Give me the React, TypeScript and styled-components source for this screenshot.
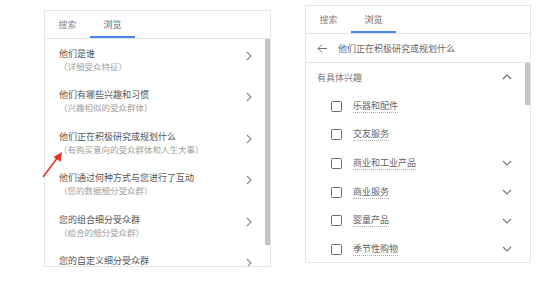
import React from 'react';
import styled, { createGlobalStyle } from 'styled-components';

const GlobalStyle = createGlobalStyle`
  html, body {
    margin: 0;
    padding: 0;
    background: #fff;
  }
  body {
    font-family: "Noto Sans CJK SC", "Noto Sans", sans-serif;
    color: #555;
  }
  * { box-sizing: border-box; }
`;

const browseItems = [
  { title: '他们是谁', sub: '（详细受众特征）' },
  { title: '他们有哪些兴趣和习惯', sub: '（兴趣相似的受众群体）' },
  { title: '他们正在积极研究或规划什么', sub: '（有购买意向的受众群体和人生大事）' },
  { title: '他们通过何种方式与您进行了互动', sub: '（您的数据细分受众群）' },
  { title: '您的组合细分受众群', sub: '（组合的细分受众群）' },
  { title: '您的自定义细分受众群', sub: '' },
];

const interests = [
  { label: '乐器和配件', more: false },
  { label: '交友服务', more: false },
  { label: '商业和工业产品', more: true },
  { label: '商业服务', more: true },
  { label: '婴童产品', more: true },
  { label: '季节性购物', more: true },
];

//右向きシェブロン
const ChevronRight = () => (
  <svg width="6" height="10" viewBox="0 0 6 10">
    <polyline points="1,1 5,5 1,9" fill="none" stroke="#888" strokeWidth="1.1" />
  </svg>
);

const ChevronDown = () => (
  <svg width="10" height="6" viewBox="0 0 10 6">
    <polyline points="1,1 5,5 9,1" fill="none" stroke="#777" strokeWidth="1.2" />
  </svg>
);

const ChevronUp = () => (
  <svg width="10" height="6" viewBox="0 0 10 6">
    <polyline points="1,5 5,1 9,5" fill="none" stroke="#666" strokeWidth="1.2" />
  </svg>
);

const BackArrow = () => (
  <svg width="10" height="9" viewBox="0 0 10 9">
    <line x1="1" y1="4.5" x2="10" y2="4.5" stroke="#777" strokeWidth="1" />
    <polyline points="5,0.5 1,4.5 5,8.5" fill="none" stroke="#777" strokeWidth="1" />
  </svg>
);

function App() {
  return (
    <Page>
      <GlobalStyle />
      <LeftPanel>
        <TabBar>
          <Tab>搜索</Tab>
          <Tab $active>浏览</Tab>
        </TabBar>
        <Body>
          <List>
            {browseItems.map((item) => (
              <Item key={item.title}>
                <ItemText>
                  <ItemTitle>{item.title}</ItemTitle>
                  {item.sub && <ItemSub>{item.sub}</ItemSub>}
                </ItemText>
                <ItemChevron>
                  <ChevronRight />
                </ItemChevron>
              </Item>
            ))}
          </List>
          <Track>
            <Thumb $height={206} />
          </Track>
        </Body>
      </LeftPanel>

      <RightPanel>
        <TabBar>
          <Tab>搜索</Tab>
          <Tab $active>浏览</Tab>
        </TabBar>
        <BackRow>
          <BackArrow />
          <BackTitle>他们正在积极研究或规划什么</BackTitle>
        </BackRow>
        <Body>
          <List>
            <SectionHeader>
              <span>有具体兴趣</span>
              <ChevronUp />
            </SectionHeader>
            {interests.map((it) => (
              <CheckRow key={it.label}>
                <CheckBox />
                <CheckLabel>{it.label}</CheckLabel>
                {it.more && (
                  <RowChevron>
                    <ChevronDown />
                  </RowChevron>
                )}
              </CheckRow>
            ))}
          </List>
          <Track>
            <Thumb $height={42} />
          </Track>
        </Body>
      </RightPanel>

      <Pointer width="34" height="40" viewBox="0 0 34 40">
        <line x1="7" y1="32" x2="22" y2="12" stroke="#e8352b" strokeWidth="1.6" />
        <polygon points="26,7 24.5,17 17.5,12" fill="#e8352b" />
      </Pointer>
    </Page>
  );
}

export default App;

const Page = styled.div`
  position: relative;
  display: flex;
  align-items: flex-start;
  width: 554px;
  height: 282px;
  padding-left: 44px;
  overflow: hidden;
`;

const LeftPanel = styled.div`
  margin-top: 10px;
  width: 227px;
  height: 257px;
  border: 1px solid #e6e6e6;
  display: flex;
  flex-direction: column;
  overflow: hidden;
  background: #fff;
`;

const RightPanel = styled.div`
  margin-top: 5px;
  margin-left: 34px;
  width: 226px;
  height: 258px;
  border: 1px solid #e6e6e6;
  display: flex;
  flex-direction: column;
  overflow: hidden;
  background: #fff;
`;

const TabBar = styled.div`
  display: flex;
  height: 28px;
  flex-shrink: 0;
  border-bottom: 1px solid #e3e3e3;
`;

const Tab = styled.div<{ $active?: boolean }>`
  width: 45px;
  display: flex;
  align-items: center;
  justify-content: center;
  font-size: 9px;
  color: ${(p) => (p.$active ? '#666' : '#888')};
  box-shadow: ${(p) => (p.$active ? 'inset 0 -2px 0 #4a86e8' : 'none')};
`;

const Body = styled.div`
  flex: 1;
  display: flex;
  min-height: 0;
`;

const List = styled.div`
  flex: 1;
  overflow: hidden;
`;

const Track = styled.div`
  width: 5px;
  flex-shrink: 0;
`;

const Thumb = styled.div<{ $height: number }>`
  width: 5px;
  height: ${(p) => p.$height}px;
  background: #c4c4c4;
`;

const Item = styled.div`
  display: flex;
  align-items: flex-start;
  padding: 8.5px 13px 9px 14px;
`;

const ItemText = styled.div`
  flex: 1;
`;

const ItemTitle = styled.div`
  font-size: 9px;
  line-height: 12px;
  color: #555;
`;

const ItemSub = styled.div`
  font-size: 8.5px;
  line-height: 12px;
  color: #a0a0a0;
`;

const ItemChevron = styled.div`
  margin-top: 3px;
  display: flex;
`;

const BackRow = styled.div`
  display: flex;
  align-items: center;
  height: 29px;
  flex-shrink: 0;
  padding-left: 11px;
  border-bottom: 1px solid #e3e3e3;
`;

const BackTitle = styled.span`
  margin-left: 11px;
  font-size: 9px;
  color: #666;
`;

const SectionHeader = styled.div`
  display: flex;
  align-items: center;
  justify-content: space-between;
  height: 28.7px;
  padding: 0 13px 0 11px;
  font-size: 9px;
  color: #777;
`;

const CheckRow = styled.div`
  display: flex;
  align-items: center;
  height: 28.7px;
  padding: 0 13px 0 25px;
`;

const CheckBox = styled.div`
  width: 11px;
  height: 11px;
  border: 1.5px solid #6a6a6a;
  border-radius: 1.5px;
  flex-shrink: 0;
`;

const CheckLabel = styled.span`
  margin-left: 11px;
  font-size: 9px;
  line-height: 12px;
  color: #666;
  border-bottom: 1px dotted #aaa;
`;

const RowChevron = styled.div`
  margin-left: auto;
  display: flex;
`;

const Pointer = styled.svg`
  position: absolute;
  left: 36px;
  top: 145px;
`;
